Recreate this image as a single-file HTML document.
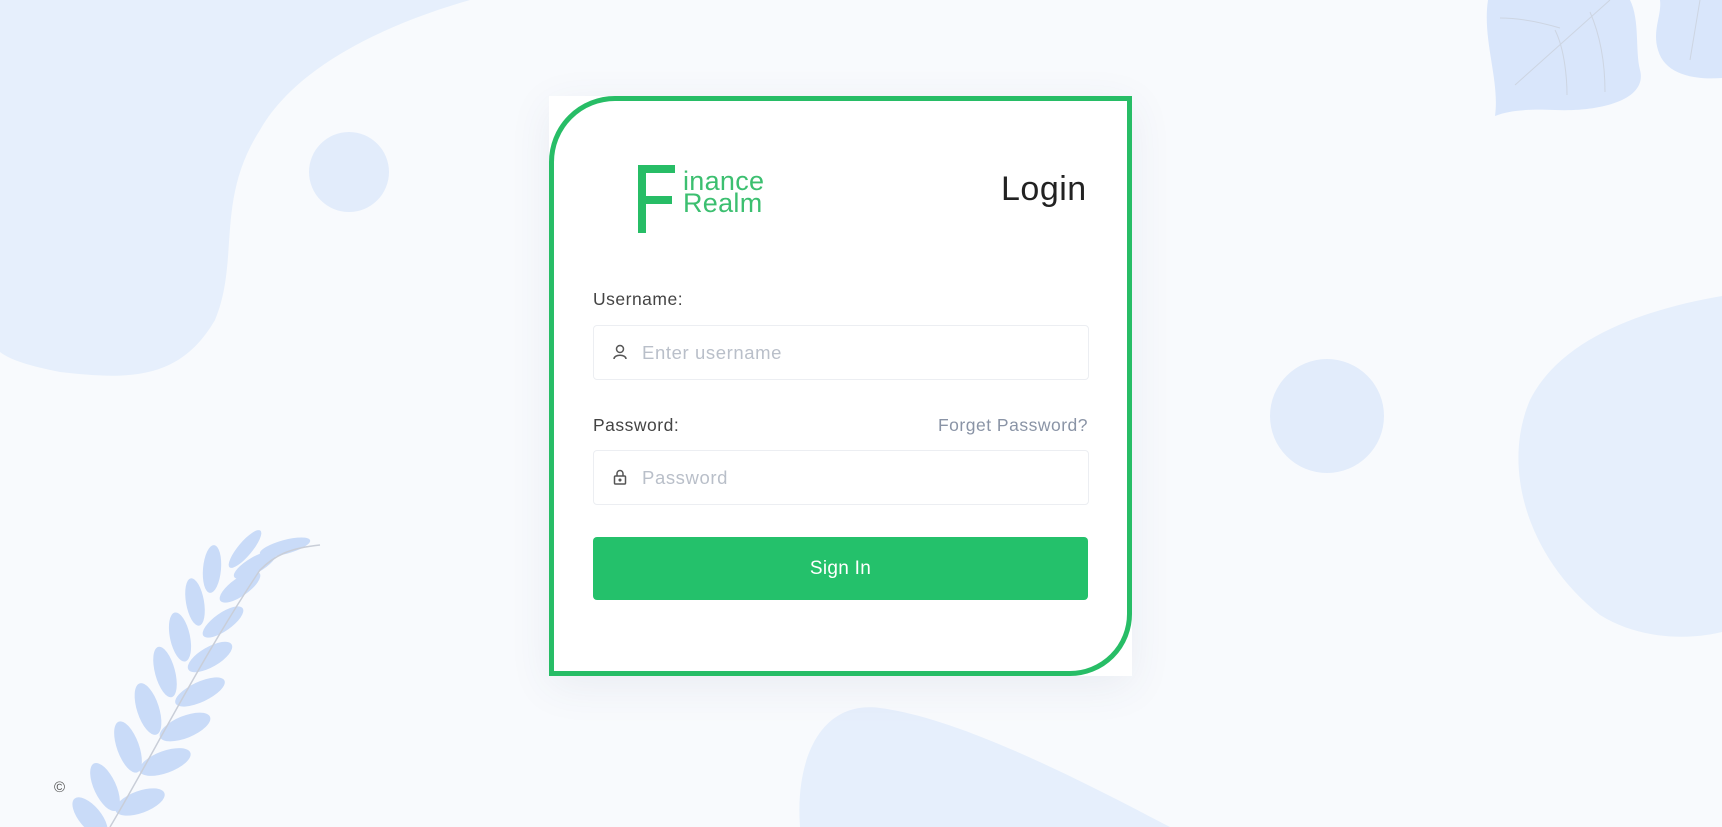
<!DOCTYPE html>
<html><head><meta charset="utf-8"><style>
html,body{margin:0;padding:0}
body{width:1722px;height:827px;overflow:hidden;background:#f8fafd;position:relative;font-family:"Liberation Sans",sans-serif}
svg.bg{position:absolute;left:0;top:0}
.card{position:absolute;left:549px;top:96px;width:583px;height:580px;background:#fff;box-shadow:0 10px 40px rgba(60,80,120,.08)}
.frame{position:absolute;left:549px;top:96px;width:573px;height:570px;border:5px solid #27bd66;border-radius:66px 0 62px 0}
.fb{position:absolute;background:#27bd66}
.logoT{position:absolute;left:683px;top:170px;color:#3cbf70;font-size:27px;line-height:22px;letter-spacing:.3px}
.login{position:absolute;left:1001px;top:170px;font-size:34px;color:#222;letter-spacing:.5px}
.lbl{position:absolute;font-size:17.5px;color:#444;letter-spacing:.5px}
.inp{position:absolute;left:593px;width:494px;height:53px;border:1px solid #eceef2;border-radius:4px;background:#fff}
.ph{position:absolute;left:48px;top:16px;font-size:18.5px;color:#b9bfc9;letter-spacing:.6px}
.ic{position:absolute;left:17px;top:17px}
.btn{position:absolute;left:593px;top:537px;width:495px;height:63px;background:#24c16b;border-radius:4px;color:#fff;font-size:19px;text-align:center;line-height:63px;letter-spacing:.3px}
</style></head><body>
<svg class="bg" width="1722" height="827" viewBox="0 0 1722 827">
<path d="M0 0 H470 C400 20 300 60 260 130 C215 200 240 260 215 320 C180 380 130 380 60 372 C30 366 10 360 0 352 Z" fill="#e6effc"/>
<circle cx="349" cy="172" r="40" fill="#e2ecfb"/>
<circle cx="1327" cy="416" r="57" fill="#e2ecfb"/>
<path d="M1722 296 C1640 310 1560 340 1530 400 C1500 470 1530 560 1600 615 C1640 640 1690 640 1722 632 Z" fill="#e6effc"/>
<path d="M800 827 C795 760 820 700 880 708 C960 718 1080 780 1170 827 Z" fill="#e6effc"/>
<path d="M1488 0 H1630 C1640 20 1635 50 1640 70 C1648 100 1600 112 1555 110 C1530 109 1510 110 1495 116 C1500 80 1482 40 1488 0 Z" fill="#d9e6fb"/>
<path d="M1660 0 H1722 V78 C1695 80 1665 75 1658 50 C1652 30 1662 15 1660 0 Z" fill="#d9e6fb"/>
<g stroke="#cdd5e2" stroke-width="1" fill="none"><path d="M1515 85 L1610 0"/><path d="M1555 30 C1565 50 1567 80 1567 95"/><path d="M1590 12 C1600 35 1605 60 1605 92"/><path d="M1500 18 C1520 18 1540 22 1560 28"/><path d="M1700 0 L1690 60"/></g>
<g fill="#c9dbf8">
<g transform="translate(110 827)">
<ellipse cx="-20" cy="-10" rx="11" ry="24" transform="rotate(-40 -20 -10)"/>
<ellipse cx="-5" cy="-40" rx="11" ry="26" transform="rotate(-25 -5 -40)"/><ellipse cx="30" cy="-25" rx="11" ry="26" transform="rotate(70 30 -25)"/>
<ellipse cx="18" cy="-80" rx="11" ry="27" transform="rotate(-20 18 -80)"/><ellipse cx="55" cy="-65" rx="11" ry="27" transform="rotate(70 55 -65)"/>
<ellipse cx="38" cy="-118" rx="11" ry="27" transform="rotate(-18 38 -118)"/><ellipse cx="75" cy="-100" rx="11" ry="27" transform="rotate(68 75 -100)"/>
<ellipse cx="55" cy="-155" rx="10" ry="26" transform="rotate(-15 55 -155)"/><ellipse cx="90" cy="-135" rx="10" ry="27" transform="rotate(65 90 -135)"/>
<ellipse cx="70" cy="-190" rx="10" ry="25" transform="rotate(-12 70 -190)"/><ellipse cx="100" cy="-170" rx="10" ry="25" transform="rotate(60 100 -170)"/>
<ellipse cx="85" cy="-225" rx="9" ry="24" transform="rotate(-10 85 -225)"/><ellipse cx="113" cy="-205" rx="9" ry="24" transform="rotate(55 113 -205)"/>
<ellipse cx="102" cy="-258" rx="9" ry="24" transform="rotate(5 102 -258)"/><ellipse cx="130" cy="-240" rx="9" ry="24" transform="rotate(55 130 -240)"/>
<ellipse cx="145" cy="-262" rx="8" ry="24" transform="rotate(60 145 -262)"/><ellipse cx="135" cy="-278" rx="7" ry="24" transform="rotate(40 135 -278)"/>
<ellipse cx="175" cy="-280" rx="7" ry="26" transform="rotate(75 175 -280)"/>
</g></g>
<path d="M110 827 C150 760 200 660 260 570 C275 555 290 548 320 545" stroke="#c9ced8" stroke-width="1.5" fill="none"/>
<text x="54" y="792" font-size="15" fill="#555" font-family="Liberation Sans">©</text>
</svg>
<div class="card"></div>
<div class="frame"></div>
<div class="fb" style="left:638px;top:165px;width:8px;height:68px"></div>
<div class="fb" style="left:638px;top:165px;width:37px;height:8px"></div>
<div class="fb" style="left:638px;top:196px;width:34px;height:8px"></div>
<div class="logoT">inance<br>Realm</div>
<div class="login">Login</div>
<div class="lbl" style="left:593px;top:289px">Username:</div>
<div class="inp" style="top:325px"><svg class="ic" width="18" height="18" viewBox="0 0 18 18" fill="none" stroke="#555" stroke-width="1.5"><circle cx="9" cy="6" r="3.5"/><path d="M3 16 C3 11 15 11 15 16"/></svg><div class="ph">Enter username</div></div>
<div class="lbl" style="left:593px;top:415px">Password:</div>
<div class="lbl" style="right:634px;top:415px;color:#8a94a6">Forget Password?</div>
<div class="inp" style="top:450px"><svg class="ic" width="18" height="18" viewBox="0 0 18 18" fill="none" stroke="#555" stroke-width="1.5"><rect x="3.5" y="8" width="11" height="8" rx="1"/><path d="M6 8 V5.5 A3 3 0 0 1 12 5.5 V8"/><circle cx="9" cy="12" r=".8" fill="#555"/></svg><div class="ph">Password</div></div>
<div class="btn">Sign In</div>
</body></html>
